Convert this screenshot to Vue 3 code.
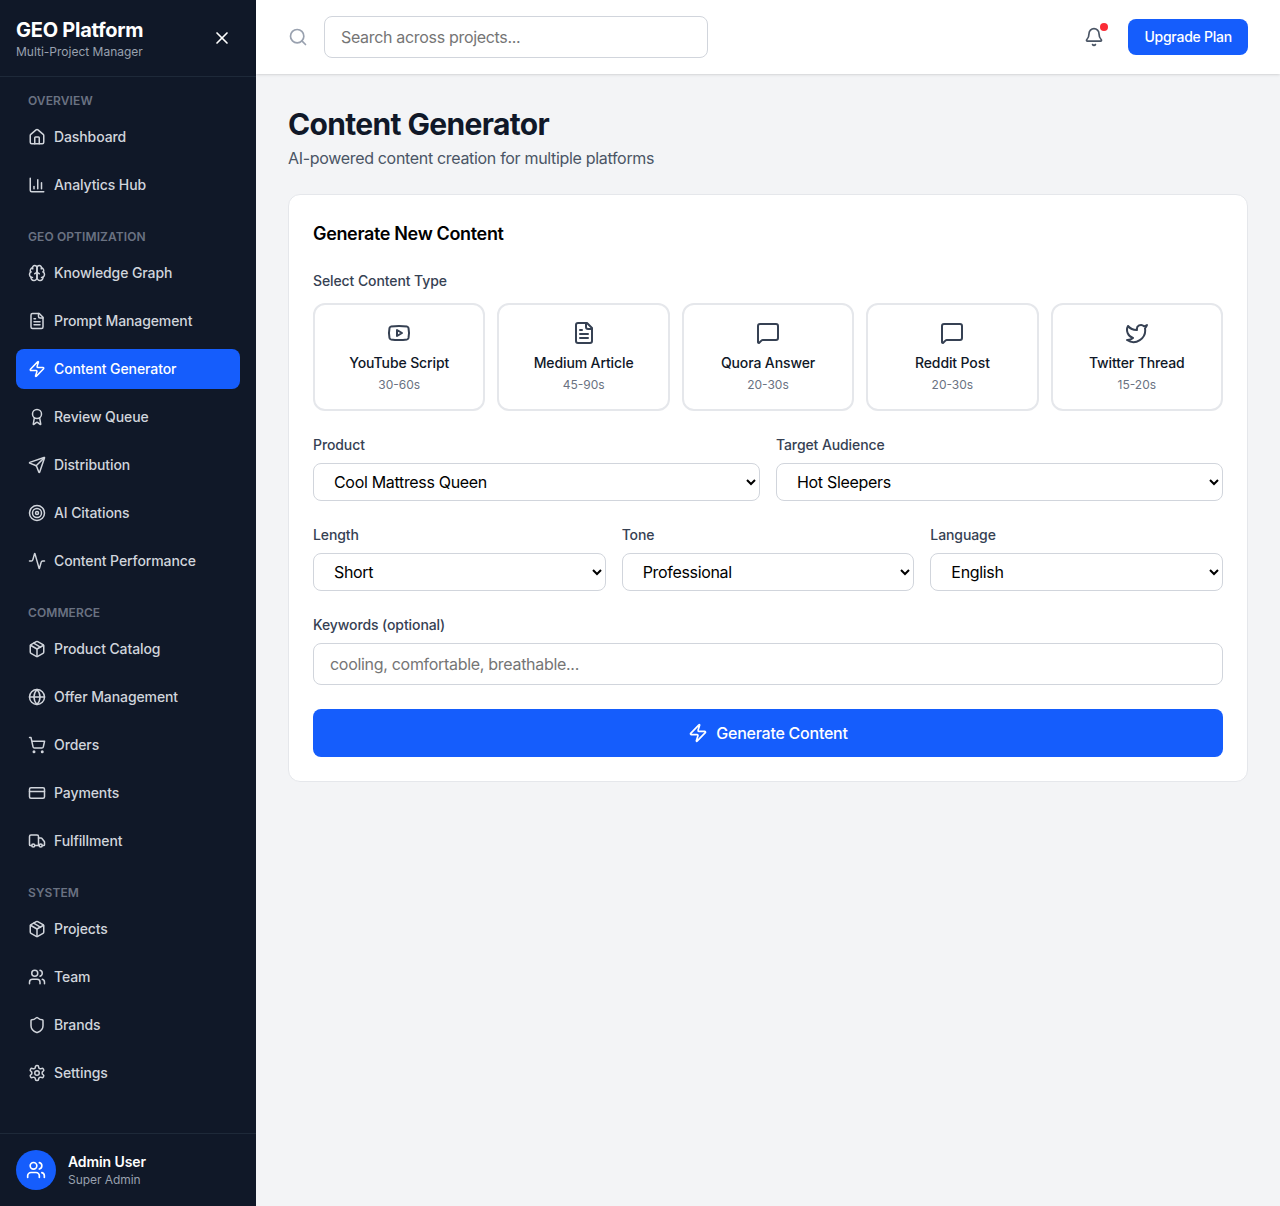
<script setup>
const icons = {
  home: '<path d="M15 21v-8a1 1 0 0 0-1-1h-4a1 1 0 0 0-1 1v8"/><path d="M3 10a2 2 0 0 1 .709-1.528l7-5.999a2 2 0 0 1 2.582 0l7 5.999A2 2 0 0 1 21 10v9a2 2 0 0 1-2 2H5a2 2 0 0 1-2-2z"/>',
  chart: '<path d="M3 3v16a2 2 0 0 0 2 2h16"/><path d="M18 17V9"/><path d="M13 17V5"/><path d="M8 17v-3"/>',
  brain: '<path d="M12 5a3 3 0 1 0-5.997.125 4 4 0 0 0-2.526 5.77 4 4 0 0 0 .556 6.588A4 4 0 1 0 12 18Z"/><path d="M12 5a3 3 0 1 1 5.997.125 4 4 0 0 1 2.526 5.77 4 4 0 0 1-.556 6.588A4 4 0 1 1 12 18Z"/><path d="M15 13a4.5 4.5 0 0 1-3-4 4.5 4.5 0 0 1-3 4"/><path d="M17.599 6.5a3 3 0 0 0 .399-1.375"/><path d="M6.003 5.125A3 3 0 0 0 6.401 6.5"/><path d="M3.477 10.896a4 4 0 0 1 .585-.396"/><path d="M19.938 10.5a4 4 0 0 1 .585.396"/><path d="M6 18a4 4 0 0 1-1.967-.516"/><path d="M19.967 17.484A4 4 0 0 1 18 18"/>',
  file: '<path d="M15 2H6a2 2 0 0 0-2 2v16a2 2 0 0 0 2 2h12a2 2 0 0 0 2-2V7Z"/><path d="M14 2v4a2 2 0 0 0 2 2h4"/><path d="M10 9H8"/><path d="M16 13H8"/><path d="M16 17H8"/>',
  zap: '<path d="M4 14a1 1 0 0 1-.78-1.63l9.9-10.2a.5.5 0 0 1 .86.46l-1.92 6.02A1 1 0 0 0 13 10h7a1 1 0 0 1 .78 1.63l-9.9 10.2a.5.5 0 0 1-.86-.46l1.92-6.02A1 1 0 0 0 11 14z"/>',
  award: '<path d="m15.477 12.89 1.515 8.526a.5.5 0 0 1-.81.47l-3.58-2.687a1 1 0 0 0-1.197 0l-3.586 2.686a.5.5 0 0 1-.81-.469l1.514-8.526"/><circle cx="12" cy="8" r="6"/>',
  send: '<path d="M14.536 21.686a.5.5 0 0 0 .937-.024l6.5-19a.496.496 0 0 0-.635-.635l-19 6.5a.5.5 0 0 0-.024.937l7.93 3.18a2 2 0 0 1 1.112 1.11z"/><path d="m21.854 2.147-10.94 10.939"/>',
  target: '<circle cx="12" cy="12" r="10"/><circle cx="12" cy="12" r="6"/><circle cx="12" cy="12" r="2"/>',
  activity: '<path d="M22 12h-2.48a2 2 0 0 0-1.93 1.46l-2.35 8.36a.25.25 0 0 1-.48 0L9.24 2.18a.25.25 0 0 0-.48 0l-2.35 8.36A2 2 0 0 1 4.49 12H2"/>',
  box: '<path d="M11 21.73a2 2 0 0 0 2 0l7-4A2 2 0 0 0 21 16V8a2 2 0 0 0-1-1.73l-7-4a2 2 0 0 0-2 0l-7 4A2 2 0 0 0 3 8v8a2 2 0 0 0 1 1.73z"/><path d="M12 22V12"/><polyline points="3.29 7 12 12 20.71 7"/><path d="m7.5 4.27 9 5.15"/>',
  globe: '<circle cx="12" cy="12" r="10"/><path d="M12 2a14.5 14.5 0 0 0 0 20 14.5 14.5 0 0 0 0-20"/><path d="M2 12h20"/>',
  cart: '<circle cx="8" cy="21" r="1"/><circle cx="19" cy="21" r="1"/><path d="M2.05 2.05h2l2.66 12.42a2 2 0 0 0 2 1.58h9.78a2 2 0 0 0 1.95-1.57l1.65-7.43H5.12"/>',
  card: '<rect width="20" height="14" x="2" y="5" rx="2"/><line x1="2" x2="22" y1="10" y2="10"/>',
  truck: '<path d="M14 18V6a2 2 0 0 0-2-2H4a2 2 0 0 0-2 2v11a1 1 0 0 0 1 1h2"/><path d="M15 18H9"/><path d="M19 18h2a1 1 0 0 0 1-1v-3.65a1 1 0 0 0-.22-.624l-3.48-4.35A1 1 0 0 0 17.52 8H14"/><circle cx="17" cy="18" r="2"/><circle cx="7" cy="18" r="2"/>',
  users: '<path d="M16 21v-2a4 4 0 0 0-4-4H6a4 4 0 0 0-4 4v2"/><circle cx="9" cy="7" r="4"/><path d="M22 21v-2a4 4 0 0 0-3-3.87"/><path d="M16 3.13a4 4 0 0 1 0 7.75"/>',
  shield: '<path d="M20 13c0 5-3.5 7.5-7.66 8.95a1 1 0 0 1-.67-.01C7.5 20.5 4 18 4 13V6a1 1 0 0 1 1-1c2 0 4.5-1.2 6.24-2.72a1.17 1.17 0 0 1 1.52 0C14.51 3.81 17 5 19 5a1 1 0 0 1 1 1z"/>',
  settings: '<path d="M12.22 2h-.44a2 2 0 0 0-2 2v.18a2 2 0 0 1-1 1.73l-.43.25a2 2 0 0 1-2 0l-.15-.08a2 2 0 0 0-2.73.73l-.22.38a2 2 0 0 0 .73 2.73l.15.1a2 2 0 0 1 1 1.72v.51a2 2 0 0 1-1 1.74l-.15.09a2 2 0 0 0-.73 2.73l.22.38a2 2 0 0 0 2.73.73l.15-.08a2 2 0 0 1 2 0l.43.25a2 2 0 0 1 1 1.73V20a2 2 0 0 0 2 2h.44a2 2 0 0 0 2-2v-.18a2 2 0 0 1 1-1.73l.43-.25a2 2 0 0 1 2 0l.15.08a2 2 0 0 0 2.73-.73l.22-.39a2 2 0 0 0-.73-2.73l-.15-.08a2 2 0 0 1-1-1.74v-.5a2 2 0 0 1 1-1.74l.15-.09a2 2 0 0 0 .73-2.73l-.22-.38a2 2 0 0 0-2.73-.73l-.15.08a2 2 0 0 1-2 0l-.43-.25a2 2 0 0 1-1-1.73V4a2 2 0 0 0-2-2z"/><circle cx="12" cy="12" r="3"/>',
  youtube: '<path d="M2.5 17a24.12 24.12 0 0 1 0-10 2 2 0 0 1 1.4-1.4 49.56 49.56 0 0 1 16.2 0A2 2 0 0 1 21.5 7a24.12 24.12 0 0 1 0 10 2 2 0 0 1-1.4 1.4 49.55 49.55 0 0 1-16.2 0A2 2 0 0 1 2.5 17"/><path d="m10 15 5-3-5-3z"/>',
  message: '<path d="M22 17a2 2 0 0 1-2 2H6.828a2 2 0 0 0-1.414.586l-2.202 2.202A.71.71 0 0 1 2 21.286V5a2 2 0 0 1 2-2h16a2 2 0 0 1 2 2z"/>',
  twitter: '<path d="M22 4s-.7 2.1-2 3.4c1.6 10-9.4 17.3-18 11.6 2.2.1 4.4-.6 6-2C3 15.5.5 9.6 3 5c2.2 2.6 5.6 4.1 9 4-.9-4.2 4-6.6 7-3.8 1.1 0 3-1.2 3-1.2z"/>',
  bell: '<path d="M10.268 21a2 2 0 0 0 3.464 0"/><path d="M3.262 15.326A1 1 0 0 0 4 17h16a1 1 0 0 0 .74-1.673C19.41 13.956 18 12.499 18 8A6 6 0 0 0 6 8c0 4.499-1.411 5.956-2.738 7.326"/>',
  search: '<path d="m21 21-4.34-4.34"/><circle cx="11" cy="11" r="8"/>',
  x: '<path d="M18 6 6 18"/><path d="m6 6 12 12"/>'
}

const sections = [
  { title: 'Overview', items: [
    { label: 'Dashboard', icon: 'home' },
    { label: 'Analytics Hub', icon: 'chart' }
  ] },
  { title: 'GEO Optimization', items: [
    { label: 'Knowledge Graph', icon: 'brain' },
    { label: 'Prompt Management', icon: 'file' },
    { label: 'Content Generator', icon: 'zap', active: true },
    { label: 'Review Queue', icon: 'award' },
    { label: 'Distribution', icon: 'send' },
    { label: 'AI Citations', icon: 'target' },
    { label: 'Content Performance', icon: 'activity' }
  ] },
  { title: 'Commerce', items: [
    { label: 'Product Catalog', icon: 'box' },
    { label: 'Offer Management', icon: 'globe' },
    { label: 'Orders', icon: 'cart' },
    { label: 'Payments', icon: 'card' },
    { label: 'Fulfillment', icon: 'truck' }
  ] },
  { title: 'System', items: [
    { label: 'Projects', icon: 'box' },
    { label: 'Team', icon: 'users' },
    { label: 'Brands', icon: 'shield' },
    { label: 'Settings', icon: 'settings' }
  ] }
]

const types = [
  { name: 'YouTube Script', time: '30-60s', icon: 'youtube' },
  { name: 'Medium Article', time: '45-90s', icon: 'file' },
  { name: 'Quora Answer', time: '20-30s', icon: 'message' },
  { name: 'Reddit Post', time: '20-30s', icon: 'message' },
  { name: 'Twitter Thread', time: '15-20s', icon: 'twitter' }
]
</script>

<template>
  <div class="app">
    <aside class="sidebar">
      <div class="brand">
        <div>
          <div class="brand-name">GEO Platform</div>
          <div class="brand-sub">Multi-Project Manager</div>
        </div>
        <button class="close" type="button">
          <svg class="i20" viewBox="0 0 24 24" v-html="icons.x"></svg>
        </button>
      </div>
      <nav class="nav">
        <section v-for="s in sections" :key="s.title" class="nav-section">
          <h3 class="nav-title">{{ s.title }}</h3>
          <div class="nav-items">
            <a v-for="item in s.items" :key="item.label" class="nav-item" :class="{ active: item.active }">
              <svg class="i18" viewBox="0 0 24 24" v-html="icons[item.icon]"></svg>
              <span>{{ item.label }}</span>
            </a>
          </div>
        </section>
      </nav>
      <div class="user">
        <div class="avatar">
          <svg class="i20" viewBox="0 0 24 24" v-html="icons.users"></svg>
        </div>
        <div>
          <div class="user-name">Admin User</div>
          <div class="user-role">Super Admin</div>
        </div>
      </div>
    </aside>

    <div class="main">
      <header class="topbar">
        <div class="search">
          <svg class="i20 search-icon" viewBox="0 0 24 24" v-html="icons.search"></svg>
          <input class="search-input" type="text" placeholder="Search across projects..." />
        </div>
        <div class="top-actions">
          <button class="bell" type="button">
            <svg class="i20" viewBox="0 0 24 24" v-html="icons.bell"></svg>
            <span class="dot"></span>
          </button>
          <button class="upgrade" type="button">Upgrade Plan</button>
        </div>
      </header>

      <main class="content">
        <h1 class="page-title">Content Generator</h1>
        <p class="page-sub">AI-powered content creation for multiple platforms</p>

        <div class="card">
          <h2 class="card-title">Generate New Content</h2>

          <div class="field-lg">
            <label class="label label-lg">Select Content Type</label>
            <div class="types">
              <button v-for="t in types" :key="t.name" class="type" type="button">
                <svg class="i24 type-icon" viewBox="0 0 24 24" v-html="icons[t.icon]"></svg>
                <span class="type-name">{{ t.name }}</span>
                <span class="type-time">{{ t.time }}</span>
              </button>
            </div>
          </div>

          <div class="row row-2">
            <div>
              <label class="label">Product</label>
              <select class="select">
                <option>Cool Mattress Queen</option>
              </select>
            </div>
            <div>
              <label class="label">Target Audience</label>
              <select class="select">
                <option>Hot Sleepers</option>
              </select>
            </div>
          </div>

          <div class="row row-3">
            <div>
              <label class="label">Length</label>
              <select class="select"><option>Short</option></select>
            </div>
            <div>
              <label class="label">Tone</label>
              <select class="select"><option>Professional</option></select>
            </div>
            <div>
              <label class="label">Language</label>
              <select class="select"><option>English</option></select>
            </div>
          </div>

          <div class="field-lg">
            <label class="label">Keywords (optional)</label>
            <input class="keywords" type="text" placeholder="cooling, comfortable, breathable..." />
          </div>

          <button class="generate" type="button">
            <svg class="i20" viewBox="0 0 24 24" v-html="icons.zap"></svg>
            <span>Generate Content</span>
          </button>
        </div>
      </main>
    </div>
  </div>
</template>

<style>
html, body { margin: 0; background: #f3f4f6; }
</style>

<style scoped>
* { box-sizing: border-box; }
.app {
  display: flex;
  min-height: 100vh;
  font-family: Inter, "Liberation Sans", sans-serif;
  background: #f3f4f6;
}
svg {
  fill: none;
  stroke: currentColor;
  stroke-width: 2;
  stroke-linecap: round;
  stroke-linejoin: round;
  flex-shrink: 0;
  display: block;
}
.i18 { width: 18px; height: 18px; }
.i20 { width: 20px; height: 20px; }
.i24 { width: 24px; height: 24px; }

.sidebar {
  width: 256px;
  flex-shrink: 0;
  background: #101828;
  display: flex;
  flex-direction: column;
}
.brand {
  display: flex;
  align-items: center;
  justify-content: space-between;
  padding: 16px;
  border-bottom: 1px solid #1e2939;
}
.brand-name { font-size: 20px; line-height: 28px; font-weight: 700; color: #fff; letter-spacing: -0.25px; }
.brand-sub { font-size: 12px; line-height: 16px; color: #99a1af; }
.close {
  background: none;
  border: 0;
  padding: 8px;
  color: #fff;
  display: flex;
}
.nav { flex: 1; padding: 16px; }
.nav-section + .nav-section { margin-top: 24px; }
.nav-title {
  margin: 0 0 8px;
  padding: 0 12px;
  font-size: 12px;
  line-height: 16px;
  font-weight: 600;
  color: #6a7282;
  text-transform: uppercase;
  letter-spacing: 0.1px;
}
.nav-items { display: flex; flex-direction: column; gap: 8px; }
.nav-item {
  display: flex;
  align-items: center;
  gap: 8px;
  height: 40px;
  padding: 0 12px;
  border-radius: 8px;
  font-size: 14px;
  line-height: 20px;
  font-weight: 500;
  letter-spacing: -0.1px;
  color: #d1d5dc;
}
.nav-item.active { background: #155dfc; color: #fff; }
.user {
  display: flex;
  align-items: center;
  gap: 12px;
  padding: 16px;
  border-top: 1px solid #1e2939;
}
.avatar {
  width: 40px;
  height: 40px;
  border-radius: 50%;
  background: #155dfc;
  color: #fff;
  display: flex;
  align-items: center;
  justify-content: center;
}
.user-name { font-size: 14px; line-height: 20px; font-weight: 600; color: #fff; letter-spacing: -0.1px; }
.user-role { font-size: 12px; line-height: 16px; color: #99a1af; letter-spacing: -0.05px; }

.main { flex: 1; min-width: 0; display: flex; flex-direction: column; }
.topbar {
  display: flex;
  align-items: center;
  justify-content: space-between;
  padding: 16px 32px;
  background: #fff;
  box-shadow: 0 1px 3px rgba(0, 0, 0, 0.1), 0 1px 2px -1px rgba(0, 0, 0, 0.1);
}
.search { display: flex; align-items: center; gap: 16px; }
.search-icon { color: #99a1af; }
.search-input {
  width: 384px;
  height: 42px;
  padding: 0 16px;
  border: 1px solid #d1d5dc;
  border-radius: 8px;
  font: inherit;
  font-size: 16px;
  letter-spacing: -0.32px;
  background: #fff;
  outline: none;
}
.top-actions { display: flex; align-items: center; gap: 16px; }
.bell {
  position: relative;
  background: none;
  border: 0;
  padding: 8px;
  color: #4a5565;
  display: flex;
}
.dot {
  position: absolute;
  top: 4px;
  right: 4px;
  width: 8px;
  height: 8px;
  border-radius: 50%;
  background: #fb2c36;
}
.upgrade {
  height: 36px;
  padding: 0 16px 2px;
  border: 0;
  border-radius: 8px;
  background: #155dfc;
  color: #fff;
  font: inherit;
  font-size: 14px;
  font-weight: 500;
  letter-spacing: -0.24px;
}

.content { padding: 32px; }
.page-title { margin: 0; font-size: 30px; line-height: 36px; font-weight: 700; color: #101828; letter-spacing: -0.65px; }
.page-sub { margin: 4px 0 24px; font-size: 16px; line-height: 24px; color: #4a5565; letter-spacing: -0.32px; }
.card {
  background: #fff;
  border: 1px solid #e5e7eb;
  border-radius: 12px;
  padding: 24px;
}
.card-title { margin: 0 0 24px; padding-top: 1px; height: 28px; font-size: 18px; line-height: 28px; font-weight: 600; color: #000; letter-spacing: -0.35px; }
.field-lg { margin-bottom: 24px; }
.label {
  display: block;
  margin-bottom: 8px;
  font-size: 14px;
  line-height: 20px;
  font-weight: 500;
  letter-spacing: -0.1px;
  color: #364153;
}
.label-lg { margin-bottom: 12px; }
.types { display: grid; grid-template-columns: repeat(5, 1fr); gap: 12px; }
.type {
  display: flex;
  flex-direction: column;
  align-items: center;
  padding: 16px;
  background: #fff;
  border: 2px solid #e5e7eb;
  border-radius: 12px;
  font: inherit;
}
.type-icon { color: #364153; margin-bottom: 8px; }
.type-name { font-size: 14px; line-height: 20px; font-weight: 500; color: #101828; letter-spacing: -0.12px; }
.type-time { margin-top: 4px; font-size: 12px; line-height: 16px; color: #6a7282; }
.row { display: grid; gap: 16px; margin-bottom: 24px; }
.row-2 { grid-template-columns: repeat(2, 1fr); }
.row-3 { grid-template-columns: repeat(3, 1fr); }
.select {
  display: block;
  width: 100%;
  height: 38px;
  padding: 0 16px;
  border: 1px solid #d1d5dc;
  border-radius: 8px;
  background: #fff;
  color: #000;
  font: inherit;
  font-size: 16px;
  letter-spacing: -0.32px;
}
.keywords {
  display: block;
  width: 100%;
  height: 42px;
  padding: 0 16px;
  border: 1px solid #d1d5dc;
  border-radius: 8px;
  font: inherit;
  font-size: 16px;
  letter-spacing: -0.3px;
  background: #fff;
  outline: none;
}
.generate {
  width: 100%;
  height: 48px;
  display: flex;
  align-items: center;
  justify-content: center;
  gap: 8px;
  border: 0;
  border-radius: 8px;
  background: #155dfc;
  color: #fff;
  font: inherit;
  font-size: 16px;
  font-weight: 500;
  letter-spacing: -0.25px;
}
</style>
